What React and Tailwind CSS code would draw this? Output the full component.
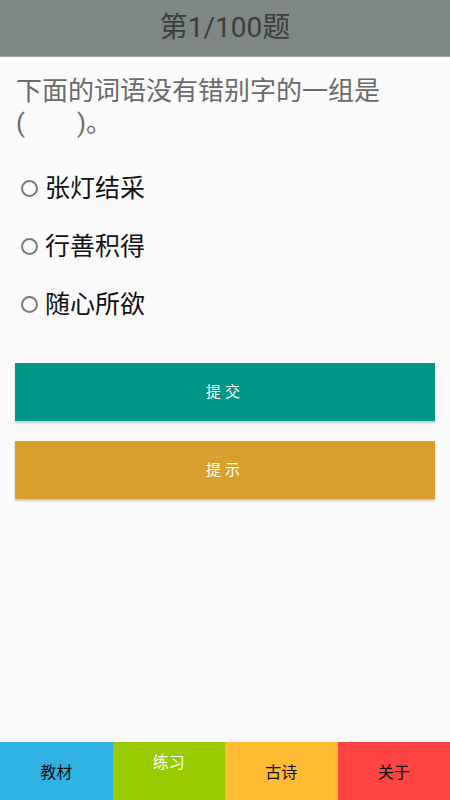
export default function App() {
  const options = ['张灯结采', '行善积得', '随心所欲'];
  return (
    <div className="w-[450px] h-[800px] flex flex-col bg-[#fafafa] font-['Roboto','Noto_Sans_CJK_SC',sans-serif]">
      <div className="h-[57px] shrink-0 bg-[#7f8784] flex items-center justify-center border-b border-[#9ea3a1]">
        <h1 className="text-[28px] text-[#3a3f3d] leading-none">第1/100题</h1>
      </div>
      <div className="flex-1 flex flex-col">
        <p className="px-4 pt-[18px] text-[26px] leading-[32px] text-[#6b6b6b]">
          下面的词语没有错别字的一组是
          <br />(　　)。
        </p>
        <div className="flex flex-col pt-[32px] pl-[21px] gap-[24px]">
          {options.map((o) => (
            <label key={o} className="flex items-center h-[34px] gap-[7px]">
              <span className="w-[17px] h-[17px] rounded-full border-2 border-[#7a7a7a]" />
              <span className="text-[25px] text-[#111] leading-none">{o}</span>
            </label>
          ))}
        </div>
        <div className="flex flex-col px-[15px] pt-[42px] gap-[20px]">
          <button className="h-[58px] bg-[#009688] text-white text-[15px] tracking-[4px] shadow-[0_2px_2px_rgba(0,0,0,0.2)]">
            提交
          </button>
          <button className="h-[58px] bg-[#d99f2d] text-white text-[15px] tracking-[4px] shadow-[0_2px_2px_rgba(0,0,0,0.2)]">
            提示
          </button>
        </div>
      </div>
      <div className="h-[58px] shrink-0 grid grid-cols-4 text-[16px]">
        <div className="bg-[#2fb2e3] flex items-center justify-center text-[#111] pt-[3px]">教材</div>
        <div className="bg-[#99cc00] flex items-start justify-center text-white pt-[9px]">练习</div>
        <div className="bg-[#ffbb33] flex items-center justify-center text-[#111] pt-[3px]">古诗</div>
        <div className="bg-[#ff4444] flex items-center justify-center text-[#111] pt-[3px]">关于</div>
      </div>
    </div>
  );
}
